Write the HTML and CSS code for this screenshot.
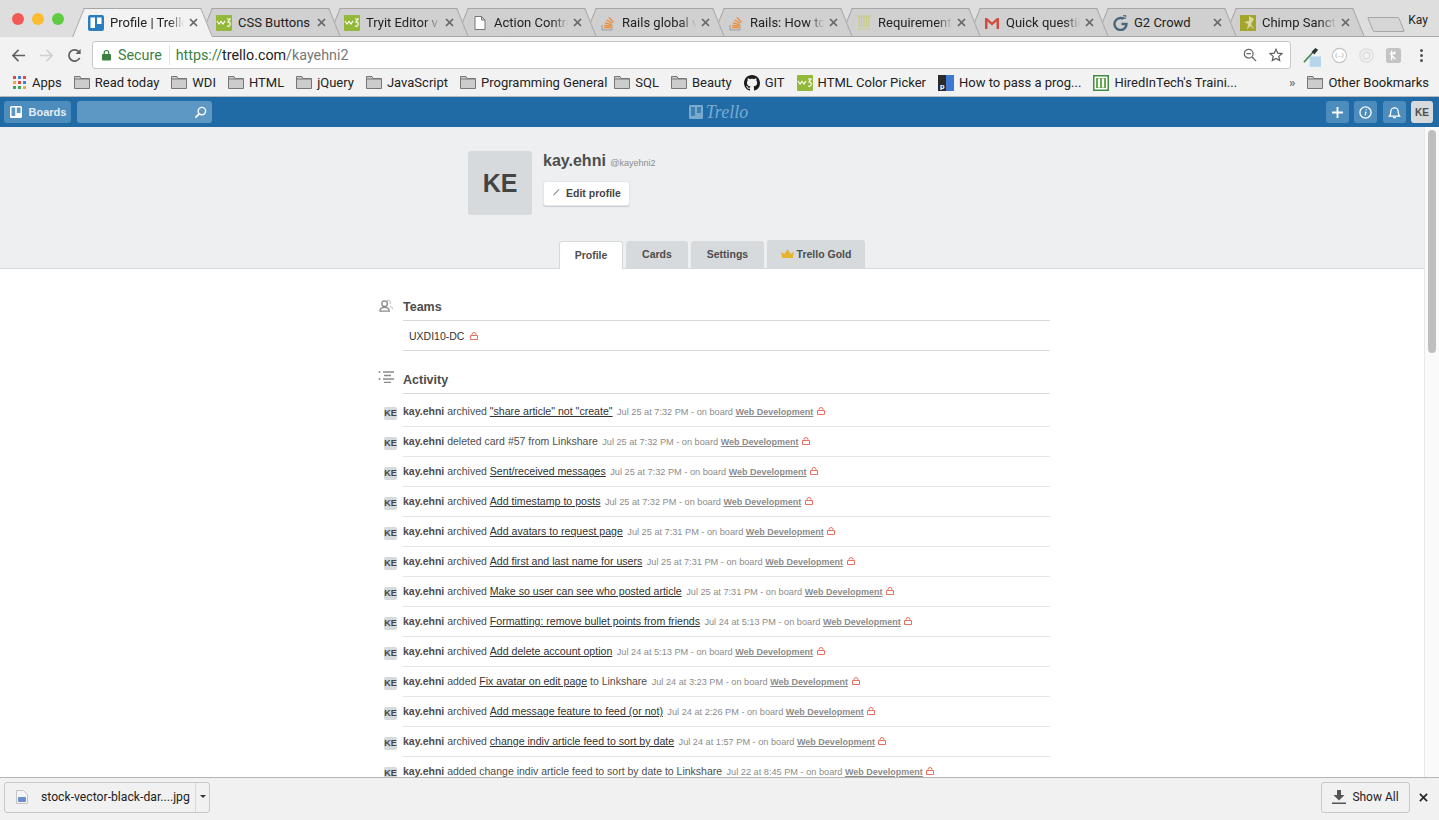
FILE: index.html
```html
<!DOCTYPE html>
<html lang="en">
<head>
    <meta charset="UTF-8">
    <title>Profile | Trello</title>
    <link rel="stylesheet" href="styles.css">
</head>
<body>
    <div class="tabstrip">
        <div class="traffic">
            <span class="light red"></span>
            <span class="light yellow"></span>
            <span class="light green"></span>
        </div>
        <div class="tabs">
            <div class="tab active">
                <svg class="favicon" viewBox="0 0 16 16"><rect width="16" height="16" rx="2" fill="#2a7ec0"/><rect x="2.500" y="2.500" width="4.500" height="10.500" fill="#fff"/><rect x="9" y="2.500" width="4.500" height="6.500" fill="#fff"/></svg>
                <span class="tab-title fade">Profile | Trello</span><svg class="tab-x" viewBox="0 0 9 9"><path d="M1 1l7 7M8 1L1 8" stroke="#666" stroke-width="1.700"/></svg>
            </div>
            <div class="tab">
                <svg class="favicon" viewBox="0 0 16 16"><rect width="16" height="16" rx="1" fill="#93b93a"/><path d="M1 6l2 3 2-2.500 2 2.500 2-3M11 4h3l-2 3q3 0 2 3-1 2-3 1" fill="none" stroke="#fff" stroke-width="1.200"/></svg>
                <span class="tab-title">CSS Buttons</span><svg class="tab-x" viewBox="0 0 9 9"><path d="M1 1l7 7M8 1L1 8" stroke="#666" stroke-width="1.700"/></svg>
            </div>
            <div class="tab">
                <svg class="favicon" viewBox="0 0 16 16"><rect width="16" height="16" rx="1" fill="#93b93a"/><path d="M1 6l2 3 2-2.500 2 2.500 2-3M11 4h3l-2 3q3 0 2 3-1 2-3 1" fill="none" stroke="#fff" stroke-width="1.200"/></svg>
                <span class="tab-title fade">Tryit Editor v</span><svg class="tab-x" viewBox="0 0 9 9"><path d="M1 1l7 7M8 1L1 8" stroke="#666" stroke-width="1.700"/></svg>
            </div>
            <div class="tab">
                <svg class="favicon" viewBox="0 0 16 16"><path d="M3 1.500h6.500l3.500 3.500v9.500h-10zM9.500 1.500v3.500h3.500" fill="#fff" stroke="#777"/></svg>
                <span class="tab-title fade">Action Contro</span><svg class="tab-x" viewBox="0 0 9 9"><path d="M1 1l7 7M8 1L1 8" stroke="#666" stroke-width="1.700"/></svg>
            </div>
            <div class="tab">
                <svg class="favicon" viewBox="0 0 16 16"><path d="M2 10v5h10v-5" fill="none" stroke="#9a9a9a"/><path d="M4 12.500h7M4.200 10.300l7 .6M5 7.800l6.800 1.800M6.500 5l6 3.200M8.800 2.500l4.800 4.600" stroke="#ee8a35" stroke-width="1.300"/></svg>
                <span class="tab-title fade">Rails global v</span><svg class="tab-x" viewBox="0 0 9 9"><path d="M1 1l7 7M8 1L1 8" stroke="#666" stroke-width="1.700"/></svg>
            </div>
            <div class="tab">
                <svg class="favicon" viewBox="0 0 16 16"><path d="M2 10v5h10v-5" fill="none" stroke="#9a9a9a"/><path d="M4 12.500h7M4.200 10.300l7 .6M5 7.800l6.800 1.800M6.500 5l6 3.200M8.800 2.500l4.800 4.600" stroke="#ee8a35" stroke-width="1.300"/></svg>
                <span class="tab-title fade">Rails: How to</span><svg class="tab-x" viewBox="0 0 9 9"><path d="M1 1l7 7M8 1L1 8" stroke="#666" stroke-width="1.700"/></svg>
            </div>
            <div class="tab">
                <svg class="favicon" viewBox="0 0 16 16"><path d="M1 1h14M3 1v11M5.500 1v11M8 1v11M10.500 1v11M13 1v11M2 14h12" stroke="#c9cc7c" stroke-width="1.200" fill="none"/></svg>
                <span class="tab-title fade">Requirements</span><svg class="tab-x" viewBox="0 0 9 9"><path d="M1 1l7 7M8 1L1 8" stroke="#666" stroke-width="1.700"/></svg>
            </div>
            <div class="tab">
                <svg class="favicon" viewBox="0 0 16 16"><path d="M1 3h2l5 4.500 5-4.500h2v11h-2.500v-7.500l-4.500 4-4.500-4v7.500h-2.500z" fill="#d24b3e"/></svg>
                <span class="tab-title fade">Quick questio</span><svg class="tab-x" viewBox="0 0 9 9"><path d="M1 1l7 7M8 1L1 8" stroke="#666" stroke-width="1.700"/></svg>
            </div>
            <div class="tab">
                <svg class="favicon" viewBox="0 0 16 16"><path d="M11.500 3.800a6 6 0 1 0 3 5.200h-5" fill="none" stroke="#47667d" stroke-width="2.400"/><path d="M11 .5h3v1.500h-3v1.500h3" fill="none" stroke="#47667d" stroke-width=".8"/></svg>
                <span class="tab-title">G2 Crowd</span><svg class="tab-x" viewBox="0 0 9 9"><path d="M1 1l7 7M8 1L1 8" stroke="#666" stroke-width="1.700"/></svg>
            </div>
            <div class="tab">
                <svg class="favicon" viewBox="0 0 16 16"><rect width="16" height="16" fill="#a3a52c"/><path d="M9 1l5 3-3 5 3 5-4-3-3 4 1-6-4-2 5-1z" fill="#d9dba0"/></svg>
                <span class="tab-title fade">Chimp Sanctu</span><svg class="tab-x" viewBox="0 0 9 9"><path d="M1 1l7 7M8 1L1 8" stroke="#666" stroke-width="1.700"/></svg>
            </div>
            <div class="new-tab"></div>
        </div>
        <div class="profile-name">Kay</div>
    </div>

    <div class="toolbar">
        <svg class="nav-icon" viewBox="0 0 16 16"><path d="M15 8H2M8 2L2 8l6 6" fill="none" stroke="#5f5f5f" stroke-width="1.700"/></svg>
        <svg class="nav-icon" viewBox="0 0 16 16"><path d="M1 8h13M8 2l6 6-6 6" fill="none" stroke="#cfcfcf" stroke-width="1.700"/></svg>
        <svg class="nav-icon" viewBox="0 0 16 16"><path d="M13.500 10.500A6 6 0 1 1 13 4.500" fill="none" stroke="#5f5f5f" stroke-width="1.800"/><path d="M14.500 1v5.500H9z" fill="#5f5f5f"/></svg>
        <div class="omnibox">
            <svg class="lock" viewBox="0 0 10 12"><path d="M2.500 5V3.500a2.500 2.500 0 0 1 5 0V5" fill="none" stroke="#3a8142" stroke-width="1.300"/><rect y="5" width="10" height="7" rx="1" fill="#3a8142"/></svg>
            <span class="secure">Secure</span>
            <span class="url"><span class="scheme">https://</span><span class="host">trello.com</span><span class="path">/kayehni2</span></span>
            <svg class="omni-icon" viewBox="0 0 16 16"><circle cx="6.500" cy="6.500" r="5" fill="none" stroke="#666" stroke-width="1.400"/><path d="M4 6.500h5M10.300 10.300L15 15" stroke="#666" stroke-width="1.400"/></svg>
            <svg class="omni-icon" viewBox="0 0 16 16"><path d="M8 1.500l2 4.400 4.700.5-3.500 3.200 1 4.700L8 11.900l-4.200 2.400 1-4.700-3.500-3.200 4.700-.5z" fill="none" stroke="#5f5f5f" stroke-width="1.400"/></svg>
        </div>
        <div class="extensions">
            <svg class="ext" viewBox="0 0 18 18"><rect x="6" y="10" width="12" height="11" fill="#b5d5ea"/><path d="M0 16L10 5" stroke="#4d8a5b" stroke-width="1.800"/><path d="M8 5l4-4 3 2-4 5z" fill="#333"/></svg>
            <svg class="ext" viewBox="0 0 18 18"><circle cx="9" cy="9" r="7.500" fill="#fff" stroke="#c4c4c4" stroke-width="1.200"/><text x="9" y="11" class="ext-text">(...)</text></svg>
            <svg class="ext" viewBox="0 0 18 18"><circle cx="9" cy="9" r="7" fill="none" stroke="#dcdcdc" stroke-width="1.500"/><circle cx="9" cy="9" r="3.500" fill="none" stroke="#dcdcdc" stroke-width="1.500"/></svg>
            <svg class="ext" viewBox="0 0 18 18"><rect width="16" height="16" x="1" y="1" rx="3" fill="#c4c4c4"/><path d="M7 4v10M7 8l4-3M7 9l4 4M5 7h6" stroke="#fff" stroke-width="1.500" fill="none"/></svg>
        </div>
        <div class="kebab"><span></span><span></span><span></span></div>
    </div>

    <div class="bookmarks">
        <div class="bm apps-bm">
            <div class="apps-grid">
                <i class="c-r"></i><i class="c-b"></i><i class="c-r"></i>
                <i class="c-y"></i><i class="c-r"></i><i class="c-b"></i>
                <i class="c-g"></i><i class="c-g"></i><i class="c-y"></i>
            </div>
            Apps
        </div>
        <div class="bm"><svg class="folder" viewBox="0 0 16 13"><path d="M.5 12.500v-12h5.500l1 2h8.500v10z" fill="#ccc" stroke="#777"/><path d="M.5 3h15" stroke="#777"/></svg>Read today</div>
        <div class="bm"><svg class="folder" viewBox="0 0 16 13"><path d="M.5 12.500v-12h5.500l1 2h8.500v10z" fill="#ccc" stroke="#777"/><path d="M.5 3h15" stroke="#777"/></svg>WDI</div>
        <div class="bm"><svg class="folder" viewBox="0 0 16 13"><path d="M.5 12.500v-12h5.500l1 2h8.500v10z" fill="#ccc" stroke="#777"/><path d="M.5 3h15" stroke="#777"/></svg>HTML</div>
        <div class="bm"><svg class="folder" viewBox="0 0 16 13"><path d="M.5 12.500v-12h5.500l1 2h8.500v10z" fill="#ccc" stroke="#777"/><path d="M.5 3h15" stroke="#777"/></svg>jQuery</div>
        <div class="bm"><svg class="folder" viewBox="0 0 16 13"><path d="M.5 12.500v-12h5.500l1 2h8.500v10z" fill="#ccc" stroke="#777"/><path d="M.5 3h15" stroke="#777"/></svg>JavaScript</div>
        <div class="bm"><svg class="folder" viewBox="0 0 16 13"><path d="M.5 12.500v-12h5.500l1 2h8.500v10z" fill="#ccc" stroke="#777"/><path d="M.5 3h15" stroke="#777"/></svg>Programming General</div>
        <div class="bm bm-tight"><svg class="folder" viewBox="0 0 16 13"><path d="M.5 12.500v-12h5.500l1 2h8.500v10z" fill="#ccc" stroke="#777"/><path d="M.5 3h15" stroke="#777"/></svg>SQL</div>
        <div class="bm"><svg class="folder" viewBox="0 0 16 13"><path d="M.5 12.500v-12h5.500l1 2h8.500v10z" fill="#ccc" stroke="#777"/><path d="M.5 3h15" stroke="#777"/></svg>Beauty</div>
        <div class="bm"><svg class="bm-icon" viewBox="0 0 16 16"><path fill="#1b1b1b" d="M8 0C3.580 0 0 3.580 0 8c0 3.540 2.290 6.530 5.470 7.590.4.070.55-.17.55-.38 0-.19-.01-.82-.01-1.490-2.010.37-2.530-.49-2.690-.94-.09-.23-.48-.94-.82-1.130-.28-.15-.68-.52-.01-.53.63-.01 1.080.58 1.230.82.72 1.210 1.870.87 2.330.66.070-.52.280-.87.510-1.070-1.780-.2-3.640-.89-3.640-3.950 0-.87.310-1.590.820-2.150-.08-.2-.36-1.020.08-2.120 0 0 .67-.21 2.200.82.640-.18 1.320-.27 2-.27s1.360.09 2 .27c1.530-1.040 2.200-.82 2.200-.82.440 1.100.160 1.920.080 2.120.510.560.820 1.270.820 2.150 0 3.070-1.870 3.750-3.650 3.950.290.250.540.730.540 1.480 0 1.070-.01 1.930-.01 2.200 0 .21.150.46.550.38A8 8 0 0 0 16 8c0-4.420-3.580-8-8-8z"/></svg>GIT</div>
        <div class="bm"><svg class="bm-icon" viewBox="0 0 16 16"><rect width="16" height="16" rx="1" fill="#93b93a"/><path d="M1 6l2 3 2-2.500 2 2.500 2-3M11 4h3l-2 3q3 0 2 3-1 2-3 1" fill="none" stroke="#fff" stroke-width="1.200"/></svg>HTML Color Picker</div>
        <div class="bm"><svg class="bm-icon" viewBox="0 0 16 16"><rect width="8" height="16" fill="#2b2b2b"/><rect x="8" width="8" height="16" fill="#3f78d0"/><text x="2" y="14" class="p-text">p</text></svg>How to pass a prog...</div>
        <div class="bm"><svg class="bm-icon" viewBox="0 0 16 16"><rect x=".75" y=".75" width="14.500" height="14.500" fill="#fff" stroke="#3e8e3e" stroke-width="1.500"/><rect x="3" y="3" width="10" height="10" fill="#6aa84f"/><path d="M6 3.500v9M10 3.500v9" stroke="#fff" stroke-width="2"/></svg>HiredInTech's Traini...</div>
        <div class="bm-spacer"></div>
        <div class="bm-more">&raquo;</div>
        <div class="bm"><svg class="folder" viewBox="0 0 16 13"><path d="M.5 12.500v-12h5.500l1 2h8.500v10z" fill="#ccc" stroke="#777"/><path d="M.5 3h15" stroke="#777"/></svg>Other Bookmarks</div>
    </div>

    <header class="trello-bar">
        <div class="bar-left">
            <a class="bar-btn boards-btn">
                <svg class="boards-icon" viewBox="0 0 12 12"><rect width="12" height="12" rx="1.500" fill="#fff"/><rect x="1.500" y="1.500" width="3.700" height="8.500" fill="#5d97c3"/><rect x="6.800" y="1.500" width="3.700" height="5.500" fill="#5d97c3"/></svg>
                Boards
            </a>
            <div class="search-box">
                <svg class="search-icon" viewBox="0 0 14 14"><circle cx="8.500" cy="5.500" r="4" fill="none" stroke="#fff" stroke-width="1.500"/><path d="M5.500 8.500L1.500 12.500" stroke="#fff" stroke-width="1.800"/></svg>
            </div>
        </div>
        <div class="bar-logo">
            <svg class="logo-mark" viewBox="0 0 14 14"><rect width="14" height="14" rx="1.500" fill="#79abcf"/><rect x="2" y="2" width="4" height="9" fill="#3f80b3"/><rect x="8" y="2" width="4" height="6" fill="#3f80b3"/></svg>
            <span class="logo-text">Trello</span>
        </div>
        <div class="bar-right">
            <a class="bar-btn square"><svg viewBox="0 0 12 12" class="bar-svg"><path d="M6 1v10M1 6h10" stroke="#fff" stroke-width="1.700"/></svg></a>
            <a class="bar-btn square"><svg viewBox="0 0 14 14" class="bar-svg"><circle cx="7" cy="7" r="6" fill="none" stroke="#fff" stroke-width="1.400"/><path d="M7.500 6l-.8 4M7.700 3.500v1.200" stroke="#fff" stroke-width="1.400"/></svg></a>
            <a class="bar-btn square"><svg viewBox="0 0 14 14" class="bar-svg"><path d="M1.500 11h11c-1.500-1.500-1.500-3-1.500-5a4 4 0 0 0-8 0c0 2 0 3.500-1.500 5zM5.500 12.500h3" fill="none" stroke="#fff" stroke-width="1.400"/></svg></a>
            <a class="bar-avatar">KE</a>
        </div>
    </header>

    <div class="viewport">
        <main class="page">
            <section class="profile-head">
                <div class="profile-row">
                    <div class="big-avatar">KE</div>
                    <div class="profile-info">
                        <div class="name-line"><span class="full-name">kay.ehni</span> <span class="username">@kayehni2</span></div>
                        <a class="edit-btn"><svg class="pencil" viewBox="0 0 10 10"><path d="M1 9l1-2.500 5.500-5.500 1 1-5.500 5.500z" fill="#999"/></svg>Edit profile</a>
                    </div>
                </div>
                <nav class="profile-tabs">
                    <a class="ptab current">Profile</a>
                    <a class="ptab">Cards</a>
                    <a class="ptab">Settings</a>
                    <a class="ptab gold">
                        <svg class="crown" viewBox="0 0 14 11"><path d="M1 10L0 3l3.500 2.500L7 0l3.500 5.500L14 3l-1 7z" fill="#e6b32e"/></svg>
                        Trello Gold
                    </a>
                </nav>
            </section>

            <section class="content">
                <div class="block">
                    <svg class="block-icon" viewBox="0 0 15 14"><circle cx="6" cy="5" r="3" fill="none" stroke="#8a8a8a" stroke-width="1.400"/><path d="M1 13c0-3 2-4 5-4s5 1 5 4z" fill="none" stroke="#8a8a8a" stroke-width="1.400"/><path d="M8.500 1.500c3-1 4 2 3.500 4M12 8c2 .5 2.500 2 2.500 3" fill="none" stroke="#aaa"/></svg>
                    <h2 class="block-title">Teams</h2>
                    <div class="team-row">UXDI10-DC <svg class="red-lock" viewBox="0 0 8 8"><path d="M2 3.500v-1a2 2 0 0 1 4 0v1M.5 3.500h7v4h-7z" fill="none" stroke="#e8705f"/></svg></div>
                </div>

                <div class="block activity-block">
                    <svg class="block-icon list-icon" viewBox="0 0 16 12"><path d="M5 1h11M6 4.500h7M5 8h11M6 11.500h7" stroke="#8a8a8a" stroke-width="1.300"/><circle cx="1.500" cy="1" r="1" fill="#8a8a8a"/><circle cx="1.500" cy="8" r="1" fill="#8a8a8a"/></svg>
                    <h2 class="block-title">Activity</h2>
                    <ul id="feed" class="feed"></ul>
                </div>
            </section>
        </main>
        <div class="scrollbar"><div class="thumb"></div></div>
    </div>

    <footer class="download-bar">
        <div class="dl-item">
            <div class="dl-main">
                <svg class="dl-file" viewBox="0 0 12 14"><path d="M.5.500h7l4 4v9h-11z" fill="#f4f4f4" stroke="#c4c4c4"/><rect x="2" y="7" width="8" height="5" rx="1" fill="#6d8fc7"/></svg>
                <span>stock-vector-black-dar....jpg</span>
            </div>
            <div class="dl-arrow"></div>
        </div>
        <div class="dl-right">
            <a class="show-all">
                <svg class="dl-down" viewBox="0 0 14 14"><path d="M5 0h4v5h3.500L7 10.500 1.500 5H5zM0 12.500h14V14H0z" fill="#555"/></svg>
                Show All
            </a>
            <svg class="dl-close" viewBox="0 0 10 10"><path d="M1 1l8 8M9 1l-8 8" stroke="#222" stroke-width="1.800"/></svg>
        </div>
    </footer>

    <script>
        // activity rows, [verb, link, tail, when]
        var rows = [
            ["archived", "\"share article\" not \"create\"", "", "Jul 25 at 7:32 PM"],
            ["deleted card #57 from Linkshare", "", "", "Jul 25 at 7:32 PM"],
            ["archived", "Sent/received messages", "", "Jul 25 at 7:32 PM"],
            ["archived", "Add timestamp to posts", "", "Jul 25 at 7:32 PM"],
            ["archived", "Add avatars to request page", "", "Jul 25 at 7:31 PM"],
            ["archived", "Add first and last name for users", "", "Jul 25 at 7:31 PM"],
            ["archived", "Make so user can see who posted article", "", "Jul 25 at 7:31 PM"],
            ["archived", "Formatting: remove bullet points from friends", "", "Jul 24 at 5:13 PM"],
            ["archived", "Add delete account option", "", "Jul 24 at 5:13 PM"],
            ["added", "Fix avatar on edit page", "to Linkshare", "Jul 24 at 3:23 PM"],
            ["archived", "Add message feature to feed (or not)", "", "Jul 24 at 2:26 PM"],
            ["archived", "change indiv article feed to sort by date", "", "Jul 24 at 1:57 PM"],
            ["added change indiv article feed to sort by date to Linkshare", "", "", "Jul 22 at 8:45 PM"]
        ];
        var lock = '<svg class="red-lock" viewBox="0 0 8 8"><path d="M2 3.500v-1a2 2 0 0 1 4 0v1M.5 3.500h7v4h-7z" fill="none" stroke="#e8705f"/></svg>';
        var html = "";
        for (var i = 0; i < rows.length; i++) {
            var r = rows[i];
            html += '<li class="feed-row"><span class="mini-avatar">KE</span>' +
                '<b class="who">kay.ehni</b> ' + r[0] + ' ' +
                (r[1] ? '<a class="card-link">' + r[1] + '</a> ' : '') +
                (r[2] ? r[2] + ' ' : '') +
                '<span class="meta">' + r[3] + ' - on board <a class="board-link">Web Development</a> ' + lock + '</span></li>';
        }
        document.getElementById("feed").innerHTML = html;
    </script>
</body>
</html>
```

FILE: styles.css
```css
* {
    box-sizing: border-box;
}
html, body {
    margin: 0;
    height: 100%;
    overflow: hidden;
}
body {
    width: 1439px;
    height: 820px;
    display: flex;
    flex-direction: column;
    font-family: "Liberation Sans", Arial, sans-serif;
    color: #333;
}

/* browser chrome */
.tabstrip {
    height: 37px;
    flex: none;
    background-color: #dedede;
    display: flex;
    position: relative;
}
.traffic {
    width: 72px;
    flex: none;
    display: flex;
    gap: 8px;
    padding: 13px 0 0 12px;
}
.light {
    width: 12px;
    height: 12px;
    border-radius: 50%;
}
.red { background-color: #f25a55; }
.yellow { background-color: #fbbc30; }
.green { background-color: #5fcc42; }

.tabs {
    display: flex;
    padding-top: 8px;
    flex: 1;
    position: relative;
    z-index: 0;
}
.tabs::after {
    content: "";
    position: absolute;
    left: 0;
    right: 0;
    bottom: 0;
    height: 1px;
    background-color: #a6a6a6;
    z-index: 10;
}
.tab {
    width: 141px;
    height: 29px;
    flex: none;
    margin-right: -13px;
    padding: 0 0 0 16px;
    display: flex;
    align-items: center;
    position: relative;
    font-size: 13px;
    color: #222;
    font-family: Roboto, "Liberation Sans", sans-serif;
}
/* left tabs sit over the ones to their right */
.tab:nth-child(2) { z-index: 9; }
.tab:nth-child(3) { z-index: 8; }
.tab:nth-child(4) { z-index: 7; }
.tab:nth-child(5) { z-index: 6; }
.tab:nth-child(6) { z-index: 5; }
.tab:nth-child(7) { z-index: 4; }
.tab:nth-child(8) { z-index: 3; }
.tab:nth-child(9) { z-index: 2; }
.tab:nth-child(10) { z-index: 1; }
.tab::before, .tab::after {
    content: "";
    position: absolute;
    top: 0;
    bottom: 0;
    width: 60%;
    background-color: #d0d0d0;
    border-top: 1px solid #a6a6a6;
    z-index: -1;
}
.tab::before {
    left: 6px;
    border-left: 1px solid #a6a6a6;
    transform: skewX(-22deg);
}
.tab::after {
    right: 6px;
    border-right: 1px solid #a6a6a6;
    transform: skewX(22deg);
}
.tab.active {
    z-index: 11;
}
.tab.active::before, .tab.active::after {
    background-color: #f2f2f2;
}
.favicon {
    width: 16px;
    height: 16px;
    flex: none;
    margin-right: 6px;
}
.tab-title {
    width: 79px;
    flex: none;
    white-space: nowrap;
}
.tab-title.fade {
    -webkit-mask-image: linear-gradient(to right, #000 74%, transparent 94%);
    mask-image: linear-gradient(to right, #000 74%, transparent 94%);
}
.tab-x {
    width: 9px;
    height: 9px;
    flex: none;
}
.new-tab {
    width: 32px;
    height: 15px;
    margin: 9px 0 0 18px;
    flex: none;
    background-color: #d6d6d6;
    border: 1px solid #a6a6a6;
    border-radius: 2px;
    transform: skewX(22deg);
}
.profile-name {
    position: absolute;
    right: 11px;
    top: 13px;
    font-size: 12px;
    font-family: Roboto, sans-serif;
    color: #222;
}

.toolbar {
    height: 32px;
    flex: none;
    background-color: #f2f2f2;
    display: flex;
    align-items: center;
    padding: 4px 10px 0 11px;
}
.nav-icon {
    width: 15px;
    height: 15px;
    margin-right: 13px;
    flex: none;
}
.omnibox {
    width: 1199px;
    height: 28px;
    flex: none;
    margin-left: -3px;
    background-color: #fff;
    border: 1px solid #c8c8c8;
    border-radius: 3px;
    display: flex;
    align-items: center;
    padding: 0 7px 0 9px;
    font-size: 14.300px;
    font-family: Roboto, "Liberation Sans", sans-serif;
}
.lock {
    width: 9px;
    height: 12px;
    margin-right: 7px;
}
.secure {
    color: #3a8142;
    padding-right: 7px;
    border-right: 1px solid #e4e4e4;
    margin-right: 6px;
    line-height: 20px;
}
.url {
    flex: 1;
}
.scheme { color: #3a8142; }
.host { color: #222; }
.path { color: #777; }
.omni-icon {
    width: 14px;
    height: 14px;
    margin-left: 12px;
}
.extensions {
    display: flex;
    gap: 10px;
    margin-left: 13px;
}
.ext {
    width: 17px;
    height: 17px;
    flex: none;
    overflow: visible;
}
.ext-text {
    font-size: 6px;
    text-anchor: middle;
    fill: #888;
}
.kebab {
    margin-left: 18px;
    display: flex;
    flex-direction: column;
    gap: 2px;
}
.kebab span {
    width: 3px;
    height: 3px;
    border-radius: 50%;
    background-color: #555;
}

.bookmarks {
    height: 28px;
    flex: none;
    background-color: #f2f2f2;
    display: flex;
    align-items: center;
    padding: 0 10px 0 13px;
    gap: 12px;
    font-size: 13px;
    font-family: Roboto, "Liberation Sans", sans-serif;
    color: #222;
    border-bottom: 1px solid #b8b8b8;
}
.bm {
    display: flex;
    align-items: center;
    white-space: nowrap;
}
.bm-tight {
    margin-left: -5px;
}
.folder {
    width: 16px;
    height: 13px;
    margin-right: 5px;
    flex: none;
}
.bm-icon {
    width: 16px;
    height: 16px;
    margin-right: 5px;
    flex: none;
}
.p-text {
    font-size: 8px;
    font-weight: bold;
    fill: #fff;
}
.apps-grid {
    display: grid;
    grid-template-columns: repeat(3, 3px);
    grid-auto-rows: 3px;
    gap: 2px;
    margin-right: 6px;
}
.c-r { background-color: #e0493d; }
.c-b { background-color: #3f7fe0; }
.c-y { background-color: #f2a93b; }
.c-g { background-color: #3ca55c; }
.bm-spacer {
    flex: 1;
}
.bm-more {
    font-weight: bold;
    color: #777;
}

/* trello header */
.trello-bar {
    height: 30px;
    flex: none;
    background-color: #206ba6;
    padding: 4px 6px 4px 4px;
    display: grid;
    grid-template-columns: 1fr auto 1fr;
    align-items: center;
}
.bar-left {
    display: flex;
    gap: 6px;
}
.bar-btn {
    height: 22px;
    display: flex;
    align-items: center;
    justify-content: center;
    background-color: #4d8dbd;
    border-radius: 3px;
    color: #fff;
    font-size: 11px;
    font-weight: bold;
}
.boards-btn {
    width: 67px;
    gap: 7px;
    padding-left: 1px;
    color: #e4eef6;
}
.boards-icon {
    width: 12px;
    height: 12px;
}
.search-box {
    width: 135px;
    height: 22px;
    background-color: #5d97c3;
    border-radius: 3px;
    display: flex;
    align-items: center;
    justify-content: flex-end;
    padding-right: 5px;
}
.search-icon {
    width: 13px;
    height: 13px;
}
.bar-logo {
    display: flex;
    align-items: center;
    gap: 3px;
}
.logo-mark {
    width: 14px;
    height: 14px;
}
.logo-text {
    font-family: "Liberation Serif", serif;
    font-style: italic;
    font-size: 18px;
    color: #79abcf;
}
.bar-right {
    display: flex;
    justify-content: flex-end;
    gap: 5.500px;
}
.square {
    width: 23px;
}
.bar-svg {
    width: 13px;
    height: 13px;
}
.bar-avatar {
    width: 22px;
    height: 22px;
    background-color: #d6dadc;
    border-radius: 3px;
    color: #4d4d4d;
    font-size: 10px;
    font-weight: bold;
    display: flex;
    align-items: center;
    justify-content: center;
}

/* page */
.viewport {
    flex: 1;
    min-height: 0;
    display: flex;
    overflow: hidden;
}
.page {
    flex: 1;
    min-width: 0;
}
.profile-head {
    background-color: #edeff0;
    height: 142px;
    border-bottom: 1px solid #d6dadc;
    display: flex;
    flex-direction: column;
    align-items: center;
    padding-top: 24px;
    position: relative;
}
.profile-row {
    display: flex;
    width: 489px;
    margin-left: 1px;
    gap: 11px;
}
.big-avatar {
    width: 64px;
    height: 64px;
    background-color: #d6dadc;
    border-radius: 3px;
    color: #444;
    font-size: 25px;
    font-weight: bold;
    display: flex;
    align-items: center;
    justify-content: center;
}
.name-line {
    line-height: 20px;
}
.full-name {
    font-size: 16px;
    font-weight: bold;
    color: #4d4d4d;
}
.username {
    font-size: 9px;
    color: #8c8c8c;
}
.edit-btn {
    margin-top: 8px;
    width: 87px;
    height: 25px;
    display: flex;
    align-items: center;
    padding: 0 0 2px 8px;
    background-color: #fff;
    border-radius: 3px;
    box-shadow: 0 1px 1px #c8cccf;
    border: 1px solid #e4e6e8;
    font-size: 10.500px;
    font-weight: bold;
    color: #444;
}
.pencil {
    width: 9px;
    height: 9px;
    margin-right: 5px;
}
.profile-tabs {
    position: absolute;
    left: 559px;
    bottom: -1px;
    display: flex;
    align-items: flex-end;
    gap: 3px;
}
.ptab {
    height: 27px;
    background-color: #d6dadc;
    border-radius: 3px 3px 0 0;
    font-size: 10.500px;
    font-weight: bold;
    color: #4d4d4d;
    display: flex;
    align-items: center;
    justify-content: center;
    margin-bottom: 1px;
    padding-bottom: 1px;
}
.ptab:nth-child(1) { width: 64px; }
.ptab:nth-child(2) { width: 62px; }
.ptab:nth-child(3) { width: 73px; }
.ptab.gold { width: 98px; gap: 3px; height: 28px; }
.ptab.current {
    background-color: #fff;
    border: 1px solid #d6dadc;
    border-bottom: none;
    height: 28px;
    margin-bottom: 0;
    padding-bottom: 2px;
}
.crown {
    width: 13px;
    height: 10px;
}
.content {
    width: 647px;
    margin-left: 403px;
    padding-top: 30px;
}
.block {
    position: relative;
}
.block-icon {
    position: absolute;
    left: -24px;
    top: 0;
    width: 14px;
    height: 13px;
}
.list-icon {
    width: 16px;
    height: 12px;
    left: -25px;
    top: -1px;
}
.block-title {
    margin: 0;
    padding-top: 1px;
    font-size: 12.500px;
    font-weight: bold;
    color: #4d4d4d;
    height: 20px;
    border-bottom: 1px solid #d6dadc;
    box-sizing: content-box;
}
.team-row {
    height: 29px;
    border-bottom: 1px solid #d6dadc;
    box-sizing: content-box;
    padding-left: 6px;
    font-size: 10.500px;
    color: #333;
    display: flex;
    align-items: center;
    gap: 5px;
}
.activity-block {
    margin-top: 21px;
}
.red-lock {
    width: 8px;
    height: 8px;
    vertical-align: 0;
    margin-left: 1px;
}
.feed {
    list-style: none;
    margin: 0;
    padding: 3px 0 0;
}
.feed-row {
    height: 30px;
    border-bottom: 1px solid #e4e6e8;
    font-size: 10.500px;
    line-height: 28px;
    color: #4d4d4d;
    white-space: nowrap;
    position: relative;
}
.mini-avatar {
    position: absolute;
    left: -19px;
    top: 10px;
    width: 13px;
    height: 13px;
    background-color: #d6dadc;
    border-radius: 2px;
    font-size: 9px;
    line-height: 13px;
    font-weight: bold;
    text-align: center;
    color: #444;
}
.who {
    color: #4d4d4d;
}
.card-link {
    color: #333;
    font-size: 10.600px;
    text-decoration: underline;
}
.meta {
    font-size: 9.200px;
    color: #8c8c8c;
    margin-left: 1.500px;
}
.board-link {
    font-size: 9px;
    font-weight: bold;
    text-decoration: underline;
}
.scrollbar {
    width: 15px;
    flex: none;
    background-color: #fafafa;
    border-left: 1px solid #e8e8e8;
    padding: 3px 3px 0 3px;
}
.thumb {
    height: 223px;
    background-color: #bfbfbf;
    border-radius: 4px;
}

/* download shelf */
.download-bar {
    height: 43px;
    flex: none;
    background-color: #f1f1f1;
    border-top: 1px solid #b4b4b4;
    display: flex;
    align-items: center;
    justify-content: space-between;
    padding: 0 9px 4px 4px;
    font-size: 11px;
    font-family: Roboto, "Liberation Sans", sans-serif;
    color: #222;
}
.dl-item {
    width: 206px;
    height: 31px;
    border: 1px solid #c8c8c8;
    border-radius: 3px;
    display: flex;
}
.dl-main {
    flex: 1;
    display: flex;
    align-items: center;
    padding-left: 11px;
    gap: 13px;
    font-size: 12.200px;
    border-right: 1px solid #d8d8d8;
}
.dl-file {
    width: 12px;
    height: 14px;
}
.dl-arrow {
    width: 13px;
    position: relative;
}
.dl-arrow::after {
    content: "";
    position: absolute;
    left: 4px;
    top: 12px;
    border: 3px solid transparent;
    border-top: 3px solid #333;
}
.dl-right {
    display: flex;
    align-items: center;
    gap: 9px;
}
.show-all {
    width: 89px;
    height: 31px;
    border: 1px solid #c8c8c8;
    border-radius: 3px;
    display: flex;
    align-items: center;
    justify-content: center;
    gap: 6px;
    font-size: 12px;
}
.dl-down {
    width: 14px;
    height: 14px;
}
.dl-close {
    width: 9px;
    height: 9px;
    margin-right: 2px;
}
```
